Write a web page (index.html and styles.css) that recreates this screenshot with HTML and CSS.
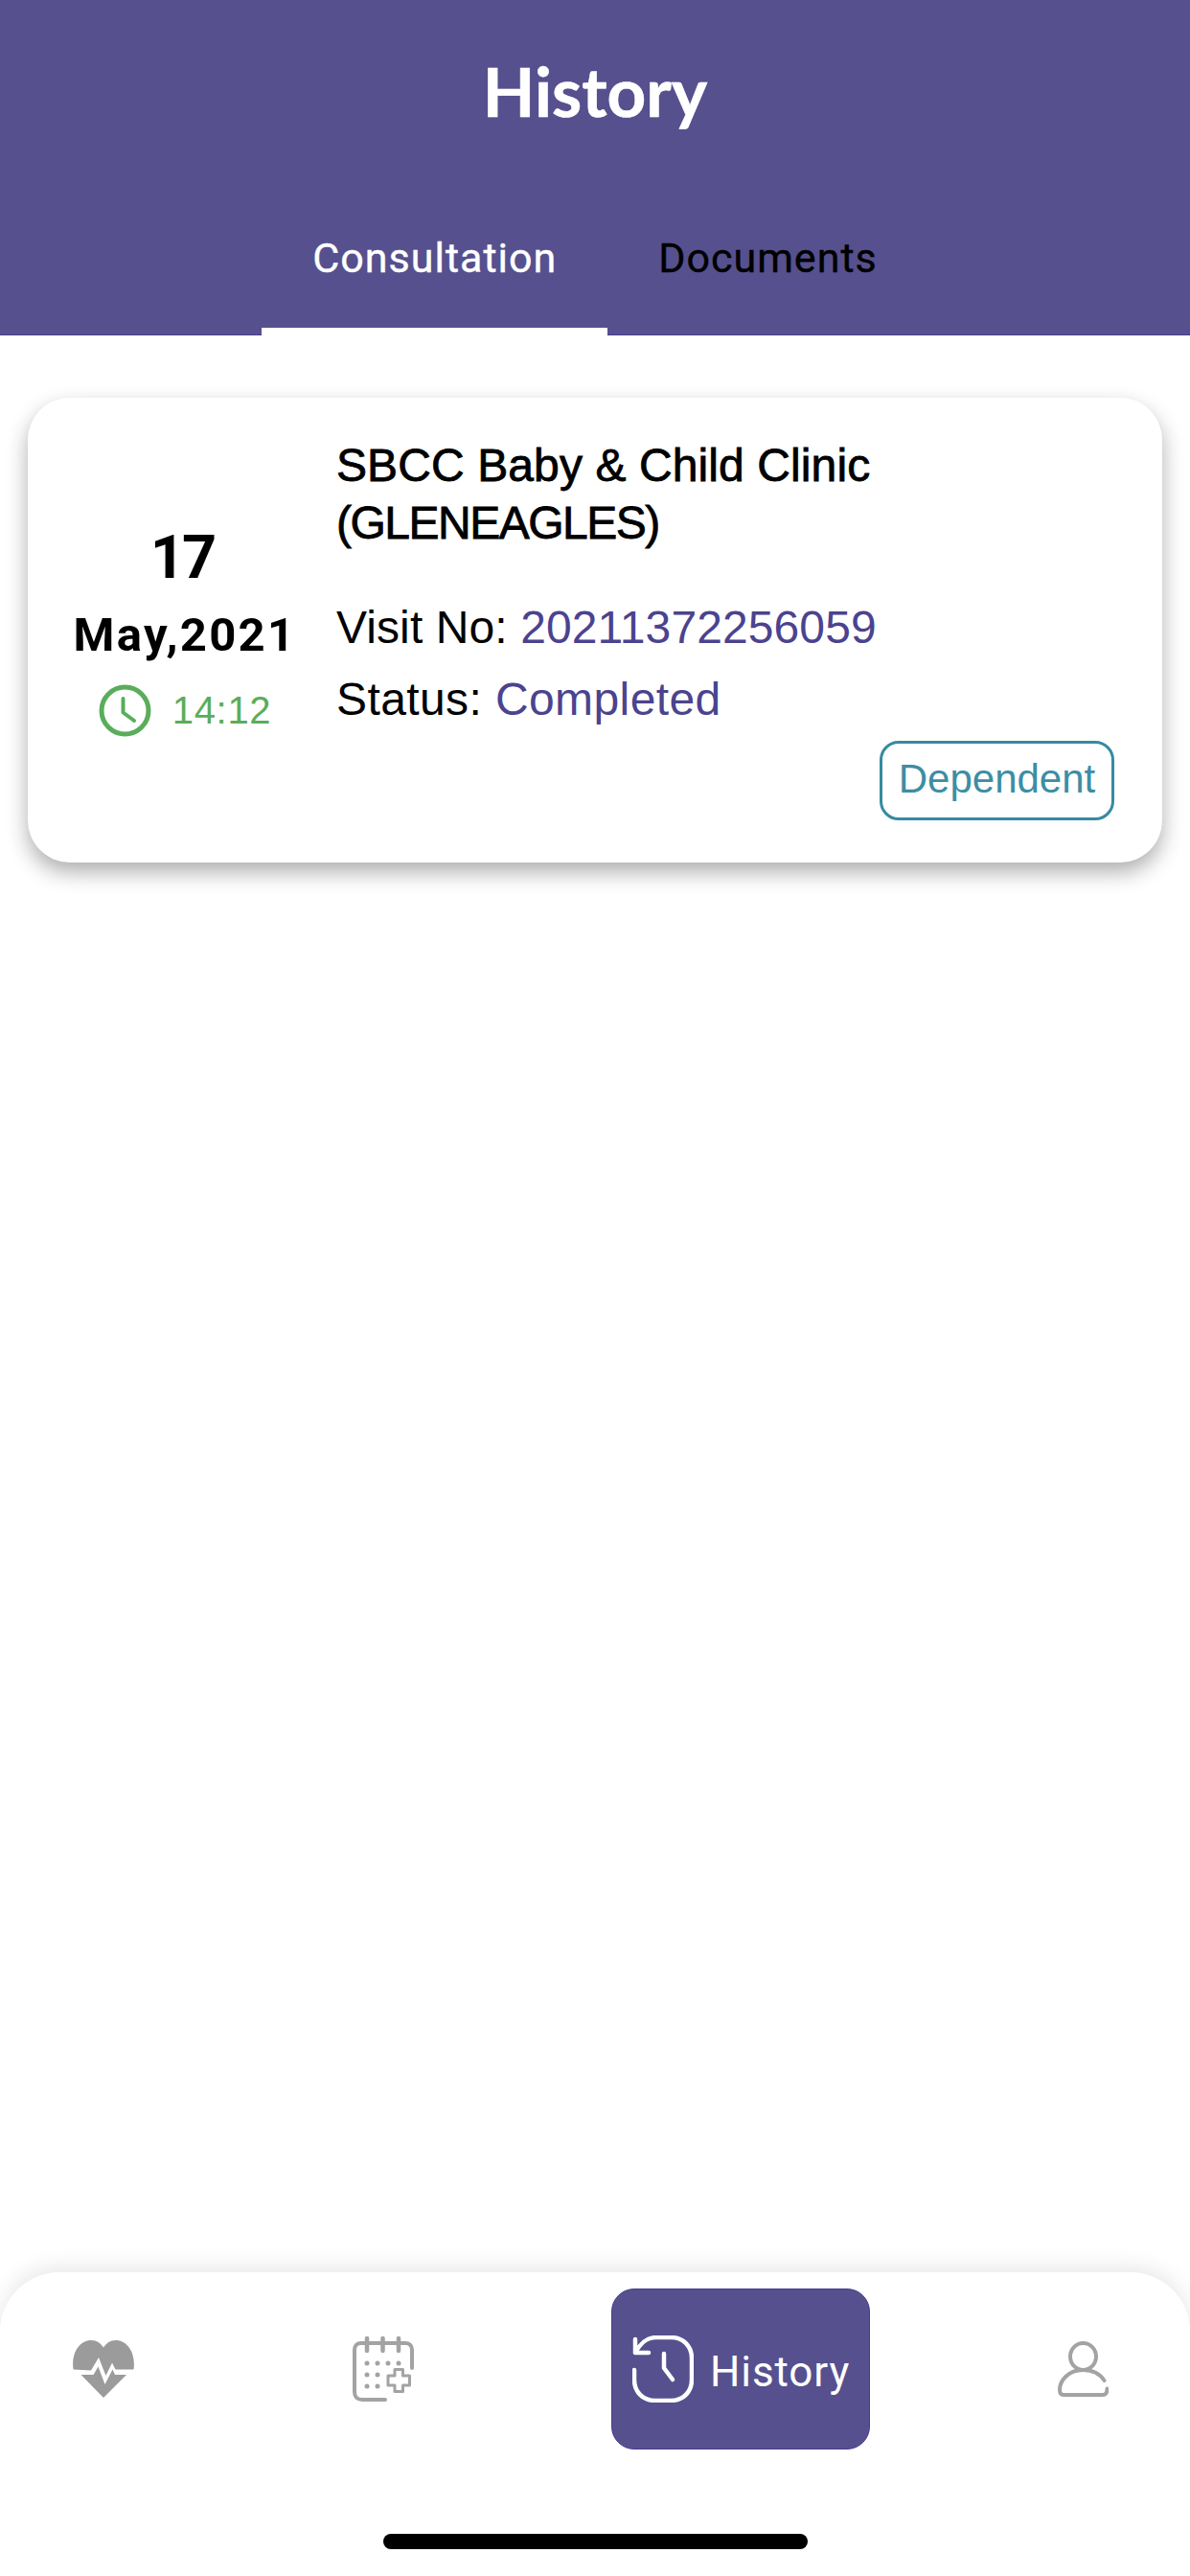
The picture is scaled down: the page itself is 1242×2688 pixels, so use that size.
FILE: index.html
```html
<!DOCTYPE html>
<html lang="en">
<head>
<meta charset="utf-8">
<title>History</title>
<link rel="stylesheet" href="styles.css">
</head>
<body>
<div class="screen">
  <header class="header">
    <h1 class="title">History</h1>
    <nav class="tabs">
      <a class="tab tab-active">Consultation</a>
      <a class="tab">Documents</a>
    </nav>
  </header>
  <main class="content">
    <article class="card">
      <div class="date">
        <div class="day">17</div>
        <div class="month">May,2021</div>
        <div class="time">
          <svg class="clock" viewBox="0 0 55 55" fill="none" stroke="#5aad5a" stroke-linecap="round" stroke-linejoin="round">
            <circle cx="27.500" cy="27.500" r="24.500" stroke-width="5"/>
            <path d="M25.500 15V29.500L37 38" stroke-width="4"/>
          </svg>
          <span class="clock-text">14:12</span>
        </div>
      </div>
      <div class="info">
        <h2 class="clinic">SBCC Baby &amp; Child Clinic<br><span class="clinic-sub">(GLENEAGLES)</span></h2>
        <p class="line">Visit No: <span class="value">20211372256059</span></p>
        <p class="line line-status">Status: <span class="value">Completed</span></p>
        <span class="badge">Dependent</span>
      </div>
    </article>
  </main>
  <footer class="bottom">
    <div class="nav">
      <svg class="ic-heart" viewBox="0 0 64 60">
        <path fill="#9b9b9b" d="M0.500 30.500C-2 12 8 0 19 0C25 0 29 3 32 7.500C35 3 39 0 45 0C56 0 66 12 63.500 30.500H44.500L41 23.500L34.500 37L27 18L19 31.500Z"/>
        <path fill="#9b9b9b" d="M8.500 36H21.500L26.500 27.500L33.500 46L41.500 30.500L44 36H56L32 60Z"/>
      </svg>
      <svg class="ic-cal" viewBox="0 0 64 68" fill="none" stroke="#a3a3a3" stroke-linecap="round" stroke-linejoin="round">
        <path d="M62 33V14C62 9.500 59 7 55 7H9C5 7 2 9.500 2 14V58C2 63 5 66 10 66H34" stroke-width="4"/>
        <path d="M15 2V15M31.500 2V15M48 2V15" stroke-width="4.500"/>
        <path d="M37 41H44V34.500H52.500V41H59.500V51H52.500V57.500H44V51H37Z" stroke-width="3"/>
        <g fill="#a3a3a3" stroke="none">
          <circle cx="15" cy="28" r="2.500"/><circle cx="26" cy="28" r="2.500"/><circle cx="37" cy="28" r="2.500"/><circle cx="48" cy="28" r="2.500"/>
          <circle cx="15" cy="40" r="2.500"/><circle cx="26" cy="40" r="2.500"/>
          <circle cx="15" cy="52" r="2.500"/><circle cx="26" cy="52" r="2.500"/>
        </g>
      </svg>
      <div class="active">
        <svg class="ic-history" viewBox="0 0 64 70" fill="none" stroke="#fff" stroke-width="4.500" stroke-linecap="round" stroke-linejoin="round">
          <path d="M3 4V18H17M3 18C8 9 14 2 25 2H40C53 2 62 11 62 24V46C62 59 53 68 40 68H24C11 68 2 59 2 46V36"/>
          <path d="M33 19V34L42 46"/>
        </svg>
        <span class="active-label">History</span>
      </div>
      <svg class="ic-user" viewBox="0 0 53 58" fill="none" stroke="#a3a3a3" stroke-width="4" stroke-linecap="round" stroke-linejoin="round">
        <ellipse cx="26.500" cy="16" rx="13.500" ry="14"/>
        <path d="M48.500 41C44 34 37 30 26.500 30C11 30 2 41 2 51C2 54 3 56 6 56H47C50 56 51.500 54 51.500 49.500"/>
      </svg>
    </div>
    <div class="home-bar"></div>
  </footer>
</div>
</body>
</html>
```
FILE: styles.css
```css
* { box-sizing: border-box; }
html, body { margin: 0; padding: 0; }
body { background: #fff; font-family: "Liberation Sans", Arial, sans-serif; }
.screen { width: 1242px; height: 2688px; display: flex; flex-direction: column; overflow: hidden; position: relative; }

.header { height: 350px; background: #56508e; border-bottom: 1px solid #453d8e; display: flex; flex-direction: column; align-items: center; }
.title { margin: 53px 0 0; font: 700 71px/84px Lato, sans-serif; color: #fff; -webkit-text-stroke: .6px #fff; }
.tabs { margin-top: 2px; padding-top: 104px; display: flex; height: 211px; }
.tab { padding: 0 53px; height: 107px; font: 400 43px/52px Roboto, sans-serif; letter-spacing: 1px; color: #000; -webkit-text-stroke: .4px currentColor; }
.tab-active { color: #fff; border-bottom: 8px solid #fff; }

.content { flex: 1; padding: 65px 29px 0; }
.card { height: 485px; background: #fff; border-radius: 44px; box-shadow: 0 10px 22px rgba(0,0,0,.32); display: flex; }
.date { width: 322px; flex: none; display: flex; flex-direction: column; align-items: center; padding-top: 130px; }
.day { font: 700 63px/74px Roboto, sans-serif; letter-spacing: -3px; color: #000; }
.month { margin-top: 15px; font: 700 49px/58px Roboto, sans-serif; letter-spacing: 2.300px; color: #000; transform: translateX(3px); }
.time { margin-top: 22px; display: flex; align-items: center; gap: 22px; font-size: 40px; color: #5aad5a; transform: translateX(3px); }
.clock { width: 55px; height: 55px; display: block; }
.clock-text { letter-spacing: .7px; }

.info { flex: 1; padding: 41px 50px 44px 0; display: flex; flex-direction: column; }
.clinic { margin: 0 0 41px; font-size: 48px; line-height: 60px; font-weight: 400; letter-spacing: .1px; color: #000; -webkit-text-stroke: .8px #000; }
.clinic-sub { letter-spacing: -1.500px; }
.line { margin: 0; font-size: 48px; line-height: 75px; letter-spacing: .1px; color: #000; }
.line-status { letter-spacing: .4px; }
.value { color: #4b438f; }
.badge { margin-top: auto; align-self: flex-end; width: 245px; height: 83px; border: 3px solid #368ba0; border-radius: 20px; font-size: 42px; line-height: 73px; text-align: center; color: #3c8ea3; }

.bottom { height: 317px; background: #fff; border-radius: 62px 62px 0 0; box-shadow: 0 -6px 22px rgba(0,0,0,.09); display: flex; flex-direction: column; padding-top: 17px; position: relative; }
.nav { height: 168px; display: flex; align-items: center; padding-left: 76px; }
.ic-heart { width: 64px; height: 60px; flex: none; }
.ic-cal { width: 64px; height: 68px; flex: none; margin-left: 228px; }
.active { width: 270px; height: 168px; flex: none; margin-left: 206px; background: #56508e; border-radius: 24px; border: 1px solid #453d8e; display: flex; align-items: center; padding-left: 21px; gap: 17px; color: #fff; font: 400 44px/50px Roboto, sans-serif; letter-spacing: .9px; }
.active-label { padding-top: 5px; }
.ic-history { width: 64px; height: 70px; flex: none; }
.ic-user { width: 53px; height: 58px; flex: none; margin-left: 196px; }
.home-bar { position: absolute; left: 400px; top: 273px; width: 443px; height: 16px; border-radius: 8px; background: #000; }
```
